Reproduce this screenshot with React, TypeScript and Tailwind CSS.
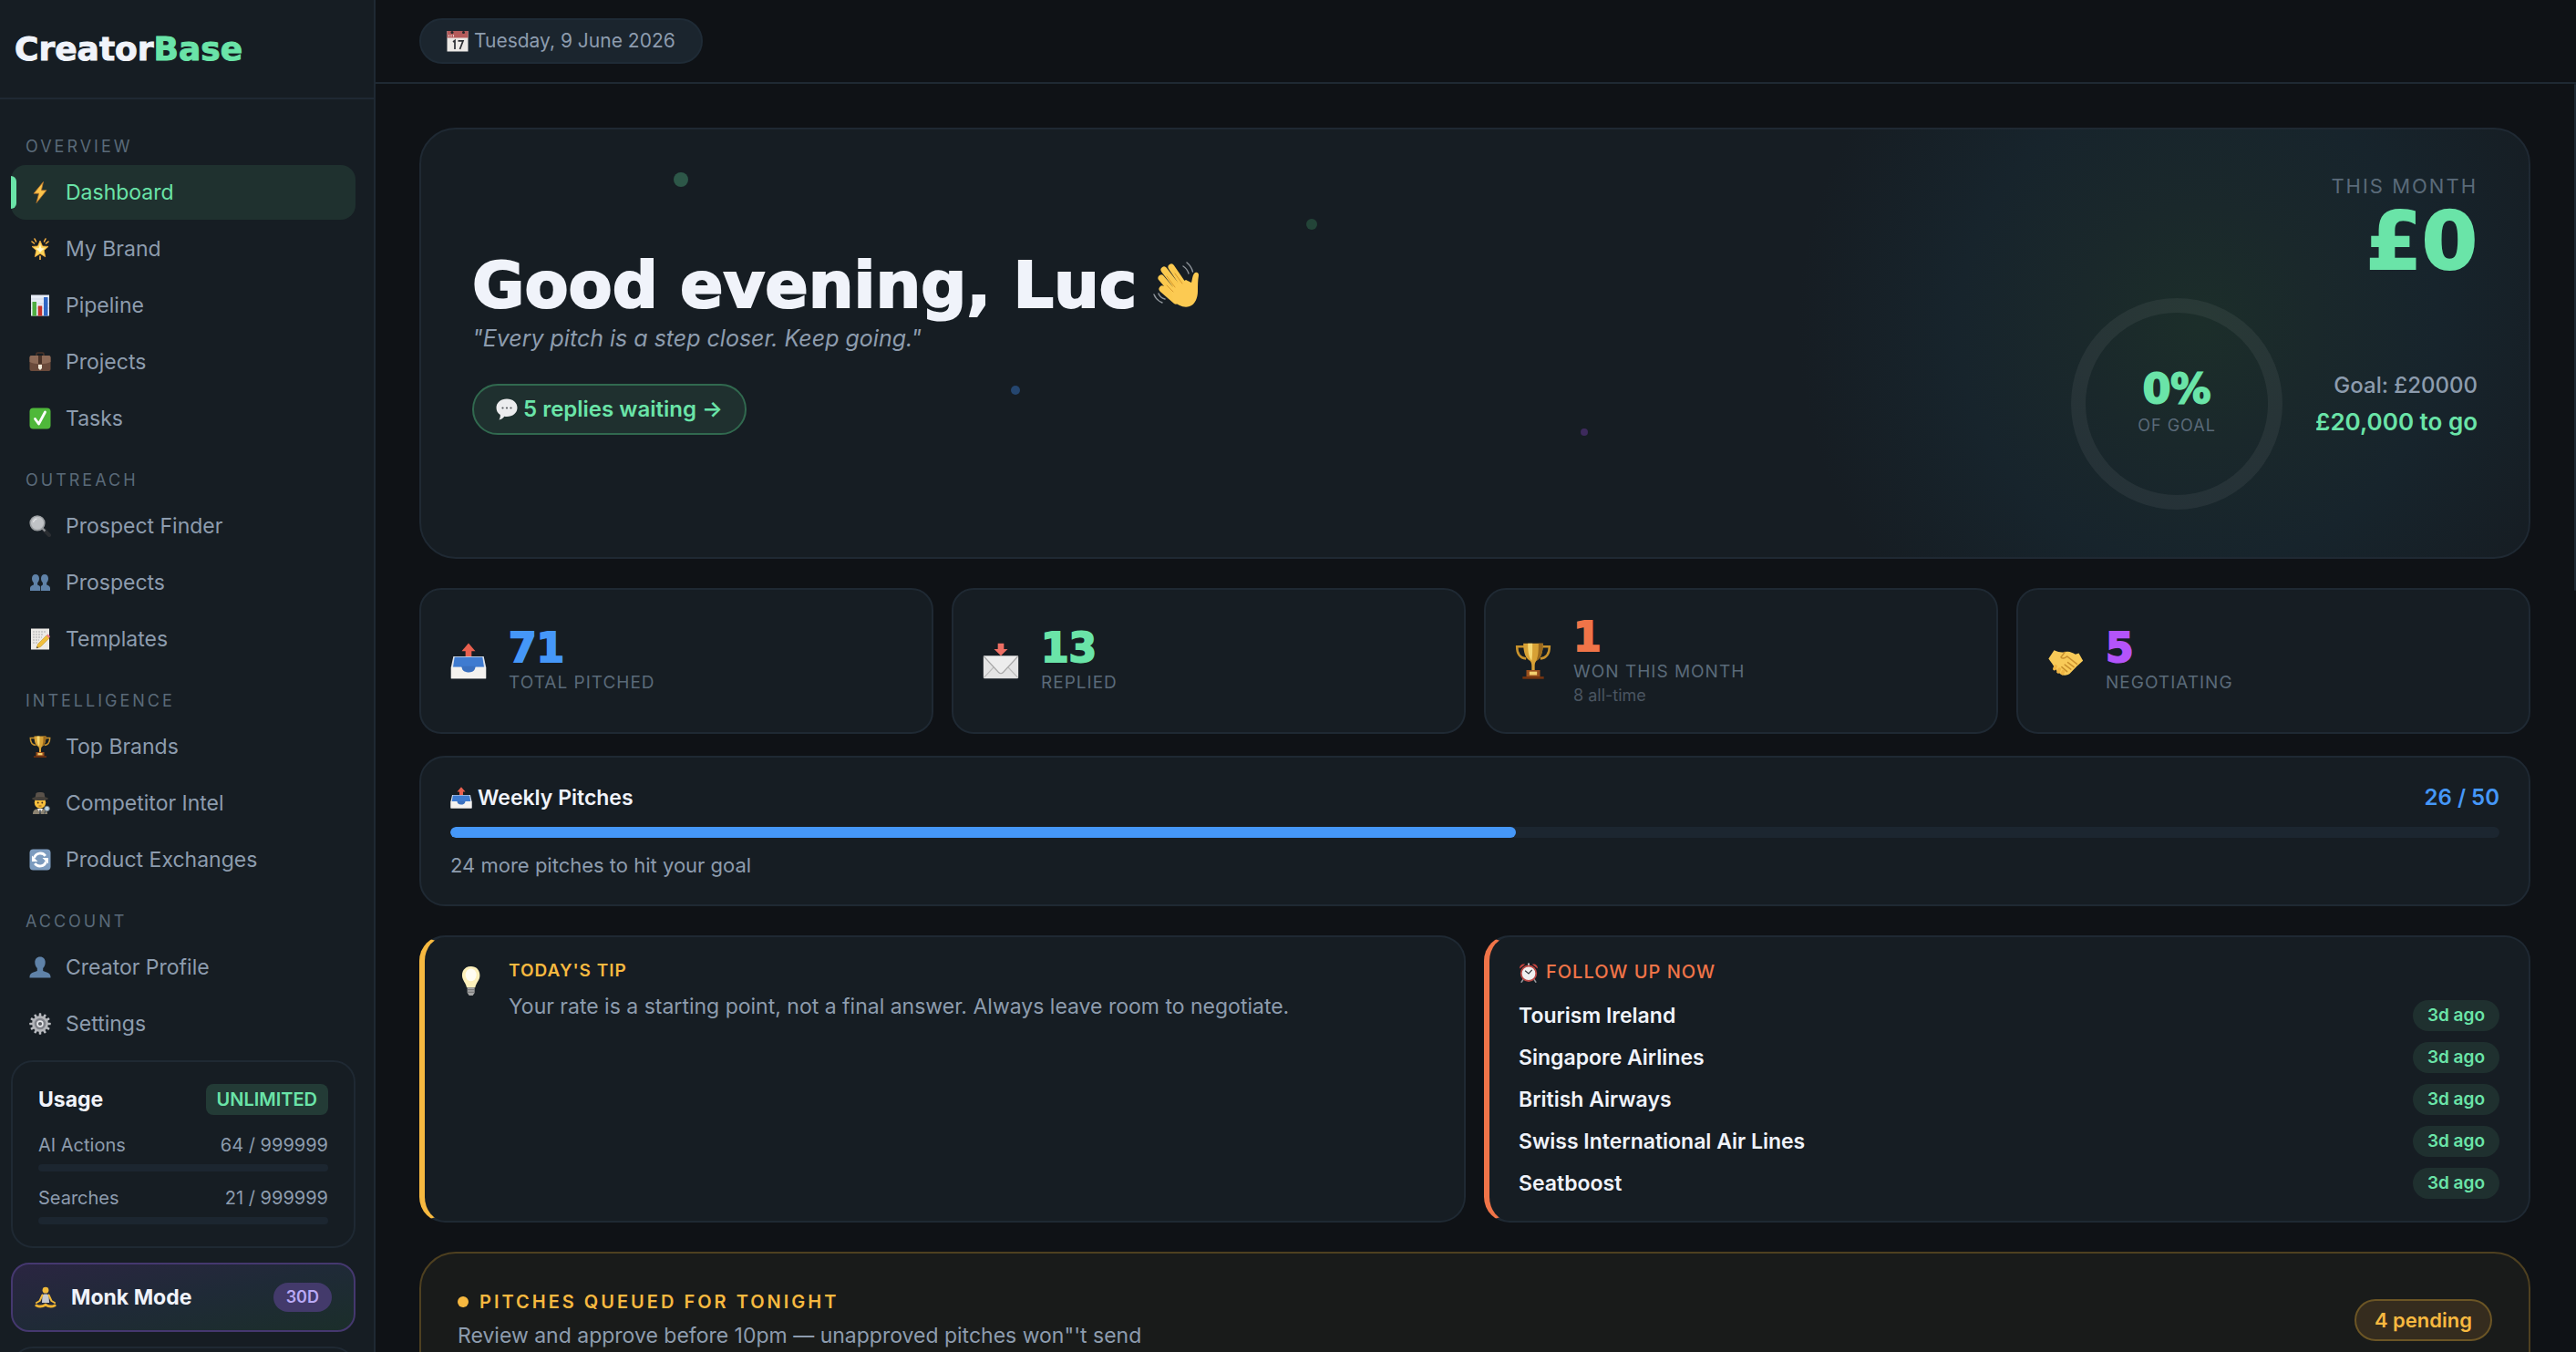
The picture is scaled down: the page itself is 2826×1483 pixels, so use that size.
import type { ReactNode } from 'react'

type IconName =
  | 'bolt'
  | 'star'
  | 'chart'
  | 'briefcase'
  | 'check'
  | 'search'
  | 'people'
  | 'memo'
  | 'trophy'
  | 'detective'
  | 'refresh'
  | 'person'
  | 'gear'
  | 'monk'
  | 'calendar'
  | 'speech'
  | 'outbox'
  | 'inbox'
  | 'handshake'
  | 'bulb'
  | 'clock'

const gearTeeth = [0, 30, 60, 90, 120, 150, 180, 210, 240, 270, 300, 330]

const drawings: Record<IconName, ReactNode> = {
  bolt: (
    <path d="M15.5 0.5 5 13.2h5.6L8 23.5 19 9.8h-5.6z" fill="#fbc44b" stroke="#b5702a" strokeWidth="0.8" />
  ),
  star: (
    <>
      <path
        d="m12 3 2.6 6 6.4.4-4.8 4.3 1.5 7L12 17.2l-5.7 3.5 1.5-7L3 9.400l6.400-.4z"
        fill="#fcd65a"
        stroke="#f0a63a"
        strokeWidth="0.8"
      />
      <path d="m12 7 1.400 4.200 3.600.3-3 2.200L12 16l-2-2.300-3-2.200 3.600-.3z" fill="#fff8cf" />
      <path d="M12 20v3.500M6 1l1.500 3M18 1l-1.500 3M3 4l2.500 2M21 4l-2.500 2" stroke="#f5b042" strokeWidth="1.600" strokeLinecap="round" />
    </>
  ),
  chart: (
    <>
      <rect x="2" y="0.500" width="20" height="23" fill="#e6ecf6" />
      <path d="M2 5h20M2 10h20M2 15h20" stroke="#c4cedd" strokeWidth="0.6" />
      <rect x="3.500" y="8" width="4.500" height="15.500" fill="#4fae41" />
      <rect x="9.700" y="12.500" width="4.500" height="11" fill="#c5322b" />
      <rect x="16" y="3" width="4.500" height="20.500" fill="#2f66c4" />
    </>
  ),
  briefcase: (
    <>
      <path d="M8 5V3.200C8 2.300 8.600 2 9.400 2h5.200c.8 0 1.400.3 1.400 1.200V5" fill="none" stroke="#4b352b" strokeWidth="1.500" />
      <rect x="0.500" y="5" width="23" height="17" rx="2" fill="#6a4a3b" />
      <path d="M0.500 7a2 2 0 0 1 2-2h19a2 2 0 0 1 2 2v5c-6 3-17 3-23 0z" fill="#8d6a57" />
      <path d="M10 5h4v9h-4z" fill="#4b3328" />
      <path d="M10 15h4v4l-2 2-2-2z" fill="#f2ead9" />
    </>
  ),
  check: (
    <>
      <rect x="0.500" y="0.500" width="23" height="23" rx="4" fill="#4fb83a" />
      <path d="m6.500 12.500 4 5.500 7-13" fill="none" stroke="#fff" strokeWidth="2.800" strokeLinecap="round" strokeLinejoin="round" />
    </>
  ),
  search: (
    <>
      <path d="m15.500 15.500 6.500 6.500" stroke="#2b2e32" strokeWidth="4" strokeLinecap="round" />
      <path d="m14 14 3.500 3.500" stroke="#8d9195" strokeWidth="2.200" />
      <circle cx="9" cy="8.800" r="7.800" fill="#c0c3c6" stroke="#9a9ea1" strokeWidth="1.600" />
      <path d="M4.500 8a5 5 0 0 1 4-4" stroke="#e3e5e6" strokeWidth="1.200" fill="none" />
    </>
  ),
  people: (
    <g fill="#5f82a8">
      <path d="M7 3c2.500 0 4 1.900 4 4.500 0 2-.8 3.700-1.800 4.700v2.300c1.300.6 2.800 1.100 2.800 2.500v4H1v-3c0-2 2.200-2.700 3.900-3.500v-2.300C3.800 11.200 3 9.500 3 7.500 3 4.900 4.500 3 7 3z" />
      <path d="M17 3c2.500 0 4 1.900 4 4.500 0 2-.8 3.700-1.800 4.700v2.300c1.700.8 3.800 1.500 3.800 3.500v3H12.800v-4c0-1.400 1-1.900 2.100-2.500v-2.300C13.800 11.200 13 9.500 13 7.500 13 4.900 14.500 3 17 3z" />
    </g>
  ),
  memo: (
    <>
      <rect x="2" y="0.500" width="20" height="23" fill="#eceae6" />
      <path d="M4 4h14M4 7h12M4 10h10M4 13h7M4 16h5" stroke="#9d9d9d" strokeWidth="0.8" strokeDasharray="2 1" />
      <path d="m8 22 1.500-4.500L19 8l3 3-9.500 9.500z" fill="#f0bf3c" stroke="#b98a1e" strokeWidth="0.5" />
      <path d="m19 8 1.500-1.500L23 9l-1 2z" fill="#ea7a86" />
      <path d="m8 22 .6-2 1.500 1.400z" fill="#3a3a3a" />
    </>
  ),
  trophy: (
    <>
      <path d="M6 2.500H1.300c0 4.500 2 7.500 6 8M18 2.500h4.700c0 4.500-2 7.500-6 8" fill="none" stroke="#c8922c" strokeWidth="1.500" />
      <path d="M5.500.5h13c0 6-1.500 10-4.500 11.500-.8 1-1 2-1 3.500v3h-2v-3c0-1.500-.2-2.500-1-3.500-3-1.500-4.500-5.500-4.500-11.500z" fill="#d7a135" />
      <path d="M8.500.5h3c0 5 0 8-.5 11.300-2-2-2.500-6-2.500-11.300z" fill="#f6d873" />
      <path d="M15.500.5h3c0 6-1.500 10-4.500 11.500 1.300-3 1.500-6 1.500-11.500z" fill="#9c6a1d" />
      <path d="M7.500 18h9v4.500h-9z" fill="#9a4f1d" />
      <path d="M9.500 19h5v2.300h-5z" fill="#f4d06f" />
      <path d="M5 22.300h14v1.500H5z" fill="#77340f" />
    </>
  ),
  detective: (
    <>
      <path d="M4 24c0-4 2-6 8-6s8 2 8 6z" fill="#8c8371" />
      <path d="m9 18 3 5 3-5z" fill="#f4f4f4" />
      <path d="M12 19.500v4.500" stroke="#26303c" strokeWidth="1.400" />
      <circle cx="12" cy="11.500" r="6.200" fill="#f6bf3c" />
      <circle cx="9.700" cy="11.500" r="0.9" fill="#3f2c1a" />
      <circle cx="14.300" cy="11.500" r="0.9" fill="#3f2c1a" />
      <path d="M10.500 15h3" stroke="#8a4d1d" strokeWidth="0.9" />
      <path d="M6.500 6.500 7.500 1c2-1.400 7-1.400 9 0l1 5.500z" fill="#5a524a" />
      <ellipse cx="12" cy="7" rx="9" ry="2" fill="#454039" />
      <circle cx="19.500" cy="18" r="2.800" fill="#b9d3e0" stroke="#6c7780" strokeWidth="0.9" />
      <path d="m18 20.500-1.500 3" stroke="#4b545c" strokeWidth="1.200" />
    </>
  ),
  refresh: (
    <>
      <rect x="0.500" y="0.500" width="23" height="23" rx="4" fill="#7d9cbf" />
      <path d="M5.500 10a7 7 0 0 1 12.300-2.200M18.500 14a7 7 0 0 1-12.300 2.200" fill="none" stroke="#fff" strokeWidth="2.800" />
      <path d="M3 7.500V14h6.500zM21 16.500V10h-6.500z" fill="#fff" />
    </>
  ),
  person: (
    <path
      d="M12 0.500c3.600 0 5.700 2.600 5.700 6 0 2.800-1 5-2.500 6.500v3c3.300 1.200 8.300 2 8.300 6.500v1H.5v-1C.5 18 5.500 17.200 8.800 16v-3C7.300 11.500 6.300 9.300 6.300 6.500c0-3.400 2.100-6 5.700-6z"
      fill="#5f82a8"
    />
  ),
  gear: (
    <>
      {gearTeeth.map((angle) => (
        <rect key={angle} x="10.700" y="0.300" width="2.600" height="4" rx="0.6" fill="#b9bbc0" transform={`rotate(${angle} 12 12)`} />
      ))}
      <circle cx="12" cy="12" r="7.600" fill="#80838a" stroke="#b4b6ba" strokeWidth="2.600" />
      <circle cx="12" cy="12" r="2.900" fill="#5b5e64" stroke="#e6e7ea" strokeWidth="1.600" />
    </>
  ),
  monk: (
    <>
      <circle cx="12" cy="4.200" r="3.400" fill="#f0b93a" />
      <path d="M8.500 9.500c1-1.500 6-1.500 7 0L16 18H8z" fill="#c7c9cf" />
      <path d="m8.500 9.500-3 6.500-3.500 2M15.500 9.500l3 6.500 3.500 2" fill="none" stroke="#f0b93a" strokeWidth="2" strokeLinecap="round" strokeLinejoin="round" />
      <path d="M2 21c3 1.500 7 1 10-.8 3 1.800 7 2.300 10 .8" fill="none" stroke="#efb331" strokeWidth="3" strokeLinecap="round" />
    </>
  ),
  calendar: (
    <>
      <rect x="0.500" y="1" width="23" height="22.500" fill="#ece9e6" />
      <rect x="0.500" y="1" width="23" height="7.500" fill="#b45a5a" />
      <circle cx="6" cy="2.500" r="1.500" fill="#252629" />
      <circle cx="18.500" cy="2.500" r="1.500" fill="#252629" />
      <path d="M2.500 5v2.500M5 5v2.500M7.500 5v2.500" stroke="#ecd3d3" strokeWidth="0.9" />
      <path d="m7 13 2-1.500V21M12.500 11.800H18L14.500 21" fill="none" stroke="#2c2e33" strokeWidth="1.700" />
    </>
  ),
  speech: (
    <>
      <path d="M12 .5c6.500 0 11.500 4 11.500 9.800S18.500 20 12 20c-1 0-1.800-.1-2.600-.3C8 21.500 6 23 3.500 23.500c1-1.500 1.500-3.500 1.300-5.500C2 16.200.5 13.500.5 10.300.5 4.500 5.500.5 12 .5z" fill="#ececee" />
      <circle cx="7.500" cy="10.500" r="1.100" fill="#55585d" />
      <circle cx="12" cy="10.500" r="1.100" fill="#55585d" />
      <circle cx="16.500" cy="10.500" r="1.100" fill="#55585d" />
    </>
  ),
  outbox: (
    <>
      <path d="M2 9h20l1.500 7v7.500H.5V16z" fill="#dfe3ea" />
      <path d="M2.800 9.500h18.400l1 6.500H1.800z" fill="#3f7bd0" />
      <path d="M.5 16H7c.5 0 .8.300 1 1 .6 1.800 2 2.800 4 2.800s3.400-1 4-2.800c.2-.7.5-1 1-1h6.500v7.500H.5z" fill="#f4f2ef" />
      <path d="M7.500 15.500h9c0 2.500-1.500 4-4.500 4s-4.500-1.500-4.500-4z" fill="#3a70bf" />
      <path d="m12 0.300 4.500 5.200H14V9h-4V5.500H7.500z" fill="#e8604f" />
    </>
  ),
  inbox: (
    <>
      <rect x="0.500" y="8.500" width="23" height="15" rx="0.500" fill="#e4e4e4" />
      <path d="m.8 23 7.500-8M23.200 23l-7.500-8" stroke="#bdbdbd" strokeWidth="0.700" />
      <path d="m.8 9 9.700 10.500c.9 1 2.100 1 3 0L23.200 9" fill="#ededed" stroke="#a9a9a9" strokeWidth="0.700" />
      <path d="M10 .5h4v3.700h2.500L12 8.600 7.500 4.200H10z" fill="#ee6f64" />
    </>
  ),
  handshake: (
    <>
      <path d="M.8 10.500 4.500 5c3 1.300 4.500 1.500 7 1.200 3-.8 4.500.2 7 1.500l2.200-.8 2.800 5-4 3.500-4.800 5c-3 2-6 .8-8.500-2L3 13.500z" fill="#f8ca58" />
      <path d="M11.500 6.200 9 9.500c.8 1.300 2.500.8 4-.5l6.500 5M13.500 13l4 3M11.500 14.500l4 3M9.500 16l3.500 3" fill="none" stroke="#c98f2c" strokeWidth="0.9" strokeLinecap="round" />
      <path d="m5.500 15.500-.8 1.600M8 17.500l-.8 1.600M10.500 19l-.6 1.200" stroke="#efb442" strokeWidth="2.200" strokeLinecap="round" />
    </>
  ),
  bulb: (
    <>
      <path d="M11 0c4.500 0 7.300 3 7.300 7.500 0 4-3.300 6.300-3.800 10H7.500C7 13.800 3.700 11.500 3.700 7.500 3.700 3 6.500 0 11 0z" fill="#fdf0bb" />
      <ellipse cx="11" cy="7" rx="4.500" ry="5.200" fill="#fffdf3" />
      <path d="M8 17.500h6v4.200L12.500 24h-3L8 21.700z" fill="#a5a5a5" />
      <path d="M8 19.200h6M8 21.200h6" stroke="#6d6d6d" strokeWidth="0.7" />
    </>
  ),
  clock: (
    <>
      <path d="m5.500 20-2 3M18.500 20l2 3" stroke="#96989c" strokeWidth="1.800" strokeLinecap="round" />
      <path d="M1.200 7C1 3.500 4 1 7.800 1.800zM22.800 7C23 3.500 20 1 16.200 1.800z" fill="#c8443f" />
      <path d="M12 0.500v3" stroke="#c8ccd0" strokeWidth="2" />
      <circle cx="12" cy="12.800" r="9" fill="#f0f0f0" stroke="#bb4a46" strokeWidth="2" />
      <path d="M7.800 9.500 12 13l4-4.500" fill="none" stroke="#303236" strokeWidth="1.200" />
    </>
  ),
}

function Icon({ name, className = 'size-6' }: { name: IconName; className?: string }) {
  return (
    <svg viewBox="0 0 24 24" className={`shrink-0 ${className}`} aria-hidden="true">
      {drawings[name]}
    </svg>
  )
}

function WavingHand() {
  return (
    <svg viewBox="12 13 54 54" className="size-[54px] shrink-0" aria-hidden="true">
      <g fill="none" stroke="#fbc94f" strokeWidth="7" strokeLinecap="round">
        <path d="m26 23 17 22M34 20l15 22M23 32l17 20M24 44l15 13" />
      </g>
      <path
        d="M33 43 50 34l6 3c1-4 1-7 3-10 2-2.500 5.500-1 5 2-1 6-1 11-1 17 0 8-3 15-9 17-6 2-13-1-18-6z"
        fill="#fcca52"
      />
      <path d="m29 30 9 12M38 27l8 11M29 40l7 7" stroke="#d99a2e" strokeWidth="1" strokeLinecap="round" fill="none" />
      <path d="M47 19c3 2 5 4.500 6 8M51 15c3 2.500 5.500 6 6.500 10M20 49c1 3 3.500 5 7 6M15 50c1.500 4 4.500 7 9 9" stroke="#8f959b" strokeWidth="1.400" fill="none" strokeLinecap="round" />
    </svg>
  )
}

interface NavItem {
  icon: IconName
  label: string
  active?: boolean
}

const navGroups: { title: string; items: NavItem[] }[] = [
  {
    title: 'OVERVIEW',
    items: [
      { icon: 'bolt', label: 'Dashboard', active: true },
      { icon: 'star', label: 'My Brand' },
      { icon: 'chart', label: 'Pipeline' },
      { icon: 'briefcase', label: 'Projects' },
      { icon: 'check', label: 'Tasks' },
    ],
  },
  {
    title: 'OUTREACH',
    items: [
      { icon: 'search', label: 'Prospect Finder' },
      { icon: 'people', label: 'Prospects' },
      { icon: 'memo', label: 'Templates' },
    ],
  },
  {
    title: 'INTELLIGENCE',
    items: [
      { icon: 'trophy', label: 'Top Brands' },
      { icon: 'detective', label: 'Competitor Intel' },
      { icon: 'refresh', label: 'Product Exchanges' },
    ],
  },
  {
    title: 'ACCOUNT',
    items: [
      { icon: 'person', label: 'Creator Profile' },
      { icon: 'gear', label: 'Settings' },
    ],
  },
]

const usage = [
  { label: 'AI Actions', value: '64 / 999999' },
  { label: 'Searches', value: '21 / 999999' },
]

const stats: { icon: IconName; value: string; label: string; note?: string; color: string }[] = [
  { icon: 'outbox', value: '71', label: 'TOTAL PITCHED', color: 'text-[#4597f8]' },
  { icon: 'inbox', value: '13', label: 'REPLIED', color: 'text-[#6ae4a8]' },
  { icon: 'trophy', value: '1', label: 'WON THIS MONTH', note: '8 all-time', color: 'text-[#f07448]' },
  { icon: 'handshake', value: '5', label: 'NEGOTIATING', color: 'text-[#b454fa]' },
]

const followUps = ['Tourism Ireland', 'Singapore Airlines', 'British Airways', 'Swiss International Air Lines', 'Seatboost']

// heavy display face: the stroke thickens the bold weight a little further
const displayFont = "font-['DejaVu_Sans',sans-serif] font-bold [-webkit-text-stroke:2px_currentColor]"

function Sidebar() {
  return (
    <aside className="flex w-[412px] shrink-0 flex-col overflow-hidden border-r-2 border-[#1f2933] bg-[#161d23]">
      <div className="flex h-[109px] shrink-0 items-center border-b-2 border-[#1f2933] px-4">
        <a
          href="#"
          className="font-['DejaVu_Sans',sans-serif] text-[36px] leading-10 font-bold text-[#f0f3fa] [-webkit-text-stroke:1px_currentColor]"
        >
          Creator<span className="text-[#6ae4a8]">Base</span>
        </a>
      </div>

      <nav className="shrink-0 pt-4 pr-5 pl-3">
        {navGroups.map(({ title, items }) => (
          <div key={title}>
            <h2 className="px-4 pt-[22px] pb-[6px] text-lg leading-7 tracking-[3px] text-[#5a6a79]">{title}</h2>
            <ul>
              {items.map(({ icon, label, active }) => (
                <li key={label} className="mb-[2px]">
                  <a
                    href="#"
                    className={`relative flex h-[60px] items-center gap-4 rounded-2xl px-5 text-[23px] ${
                      active ? 'bg-[#1f312f] text-[#6ae4a8]' : 'text-[#8d9cae]'
                    }`}
                  >
                    {active && <span className="absolute top-3 bottom-3 left-0 w-[6px] rounded-r-md bg-[#6ae4a8]" />}
                    <Icon name={icon} />
                    {label}
                  </a>
                </li>
              ))}
            </ul>
          </div>
        ))}
      </nav>

      <section className="mt-2 mr-5 ml-3 shrink-0 rounded-3xl border-2 border-[#1f2933] px-7 py-6">
        <div className="mb-5 flex items-center justify-between">
          <h2 className="text-[23px] leading-[34px] font-bold text-[#f0f3fa]">Usage</h2>
          <span className="rounded-lg bg-[#233b36] px-3 text-xl leading-[34px] font-semibold text-[#6ae4a8]">UNLIMITED</span>
        </div>
        <div className="space-y-4">
          {usage.map(({ label, value }) => (
            <div key={label}>
              <div className="flex justify-between text-xl leading-[26px] text-[#8d9cae]">
                <span>{label}</span>
                <span>{value}</span>
              </div>
              <div className="mt-2 h-2 rounded-full bg-[#1c2630]" />
            </div>
          ))}
        </div>
      </section>

      <button
        type="button"
        className="mt-4 mr-5 ml-3 flex h-[76px] shrink-0 items-center gap-4 rounded-[20px] border-2 border-[#45386f] bg-linear-to-br from-[#2a2541] via-[#1f2a37] to-[#1b2e2a] px-6 text-[23px] font-bold text-[#f0f3fa]"
      >
        <Icon name="monk" />
        Monk Mode
        <span className="ml-auto rounded-full bg-[#433a6b] px-[14px] text-lg leading-8 font-semibold text-[#b9a9f5]">30D</span>
      </button>

      <div className="mt-4 mr-5 ml-3 h-20 shrink-0 rounded-3xl border-2 border-[#1f2933]" />
    </aside>
  )
}

function Hero() {
  return (
    <section className="relative flex items-center justify-between overflow-hidden rounded-[40px] border-2 border-[#1f2933] bg-[#161d23] bg-[radial-gradient(circle_440px_at_calc(100%-362px)_46%,#1c2e2a_0%,#1a282b_30%,#17242c_60%,#161d23_100%)] px-[56px] py-12">
      <span className="absolute top-[10%] left-[12%] size-4 rounded-full bg-[#2d5748]" />
      <span className="absolute top-[21%] left-[42%] size-3 rounded-full bg-[#234438]" />
      <span className="absolute top-[60%] left-[28%] size-[10px] rounded-full bg-[#25466f]" />
      <span className="absolute top-[70%] left-[55%] size-2 rounded-full bg-[#3d2a5c]" />

      <div>
        <h1 className={`${displayFont} flex items-center gap-4 text-[70px] leading-[72px] text-[#f0f3fa]`}>
          Good evening, Luc <WavingHand />
        </h1>
        <p className="text-[25px] leading-[44px] text-[#8d9cae] italic">"Every pitch is a step closer. Keep going."</p>
        <button
          type="button"
          className="mt-7 flex h-[56px] items-center gap-[6px] rounded-full border-2 border-[#31694f] bg-[#1f302f] px-6 text-2xl font-semibold text-[#6ae4a8]"
        >
          <Icon name="speech" />5 replies waiting →
        </button>
      </div>

      <div className="flex flex-col items-end">
        <p className="text-[22px] leading-7 tracking-[2px] text-[#5a6a79]">THIS MONTH</p>
        <p className={`${displayFont} text-[88px] leading-[93px] text-[#6ae4a8]`}>£0</p>
        <div className="mt-3 flex items-center gap-8">
          <div className="grid size-60 place-items-center">
            <svg viewBox="0 0 240 240" className="col-start-1 row-start-1 size-60" aria-hidden="true">
              <circle cx="120" cy="120" r="108" fill="none" stroke="#fff" strokeOpacity="0.06" strokeWidth="16" />
            </svg>
            <div className="col-start-1 row-start-1 text-center">
              <p className={`${displayFont} text-[44px] leading-[48px] text-[#6ae4a8]`}>0%</p>
              <p className="text-lg leading-8 tracking-[1px] text-[#5a6a79]">OF GOAL</p>
            </div>
          </div>
          <div className="text-right leading-10">
            <p className="text-2xl leading-10 font-medium text-[#8d9cae]">Goal: £20000</p>
            <p className="text-[26px] leading-10 font-semibold text-[#6ae4a8]">£20,000 to go</p>
          </div>
        </div>
      </div>
    </section>
  )
}

function Stats() {
  return (
    <section className="mt-8 grid grid-cols-4 gap-5">
      {stats.map(({ icon, value, label, note, color }) => (
        <div key={label} className="flex h-40 items-center gap-6 rounded-3xl border-2 border-[#1f2933] bg-[#161d23] px-8">
          <Icon name={icon} className="size-10" />
          <div>
            <p className={`${displayFont} text-[44px] leading-[48px] ${color}`}>{value}</p>
            <p className="text-[19px] leading-7 tracking-[1px] text-[#5a6a79]">{label}</p>
            {note && <p className="text-lg leading-6 text-[#4a5561]">{note}</p>}
          </div>
        </div>
      ))}
    </section>
  )
}

function WeeklyPitches() {
  const sent = 26
  const goal = 50

  return (
    <section className="mt-6 rounded-[28px] border-2 border-[#1f2933] bg-[#161d23] px-8 py-7">
      <div className="flex items-center justify-between leading-8 font-semibold">
        <h2 className="flex items-center gap-[6px] text-[23px] text-[#f0f3fa]">
          <Icon name="outbox" />
          Weekly Pitches
        </h2>
        <span className="text-2xl leading-8 text-[#4597f8]">
          {sent} / {goal}
        </span>
      </div>
      <div className="mt-4 h-3 overflow-hidden rounded-full bg-[#1c2630]">
        <div className="h-full rounded-full bg-[#4597f8]" style={{ width: `${(sent / goal) * 100}%` }} />
      </div>
      <p className="mt-4 text-[22px] leading-[29px] text-[#8d9cae]">{goal - sent} more pitches to hit your goal</p>
    </section>
  )
}

function TipAndFollowUps() {
  return (
    <div className="mt-8 grid grid-cols-2 gap-5">
      <section className="flex gap-6 rounded-[28px] border-2 border-l-[6px] border-[#1f2933] border-l-[#f7b940] bg-[#161d23] px-9 py-6">
        <Icon name="bulb" className="mt-2 size-8" />
        <div>
          <h2 className="text-[19px] leading-[26px] font-semibold tracking-[1px] text-[#f7b940]">TODAY'S TIP</h2>
          <p className="mt-2 text-[23px] leading-9 text-[#8d9cae]">
            Your rate is a starting point, not a final answer. Always leave room to negotiate.
          </p>
        </div>
      </section>

      <section className="rounded-[28px] border-2 border-l-[6px] border-[#1f2933] border-l-[#f07448] bg-[#161d23] px-8 py-6">
        <h2 className="flex items-center gap-2 text-xl leading-[29px] font-medium tracking-[1px] text-[#f07448]">
          <Icon name="clock" className="size-[22px]" />
          FOLLOW UP NOW
        </h2>
        <ul className="mt-4 space-y-3">
          {followUps.map((brand) => (
            <li key={brand} className="flex items-center justify-between leading-[34px]">
              <span className="text-[23px] font-semibold text-[#f0f3fa]">{brand}</span>
              <span className="rounded-full bg-[#1f302f] px-4 text-[19px] font-semibold text-[#6ae4a8]">3d ago</span>
            </li>
          ))}
        </ul>
      </section>
    </div>
  )
}

function QueuedPitches() {
  return (
    <section className="mt-8 flex items-start justify-between rounded-[40px] border-2 border-[#4e4020] bg-[#191b1a] px-10 pt-9 pb-24">
      <div>
        <h2 className="flex items-center gap-3 text-xl leading-[34px] font-semibold tracking-[3px] text-[#f7b940]">
          <span className="size-3 rounded-full bg-[#f7b940]" />
          PITCHES QUEUED FOR TONIGHT
        </h2>
        <p className="text-[23px] leading-10 text-[#8d9cae]">Review and approve before 10pm — unapproved pitches won"'t send</p>
      </div>
      <span className="mt-[14px] flex h-[46px] items-center rounded-full border-2 border-[#6b5525] bg-[#352c1e] px-5 text-[22px] font-semibold text-[#f7b940]">
        4 pending
      </span>
    </section>
  )
}

export default function App() {
  return (
    <div className="flex h-screen overflow-hidden bg-[#0f1216] font-['Inter',sans-serif]">
      <Sidebar />
      <div className="flex min-w-0 flex-1 flex-col">
        <header className="flex h-[92px] shrink-0 items-center border-b-2 border-[#1f2933] px-12">
          <div className="flex h-[50px] items-center gap-[6px] rounded-full border-2 border-[#1f2b36] bg-[#1b252e] px-7 text-[21px] text-[#8d9cae]">
            <Icon name="calendar" />
            Tuesday, 9 June 2026
          </div>
        </header>
        <main className="relative min-h-0 flex-1 overflow-hidden pt-12 pr-[50px] pl-12">
          <Hero />
          <Stats />
          <WeeklyPitches />
          <TipAndFollowUps />
          <QueuedPitches />
          <span className="absolute top-0 right-0 h-[40%] w-[2px] rounded-full bg-[#1f2933]" />
        </main>
      </div>
    </div>
  )
}
